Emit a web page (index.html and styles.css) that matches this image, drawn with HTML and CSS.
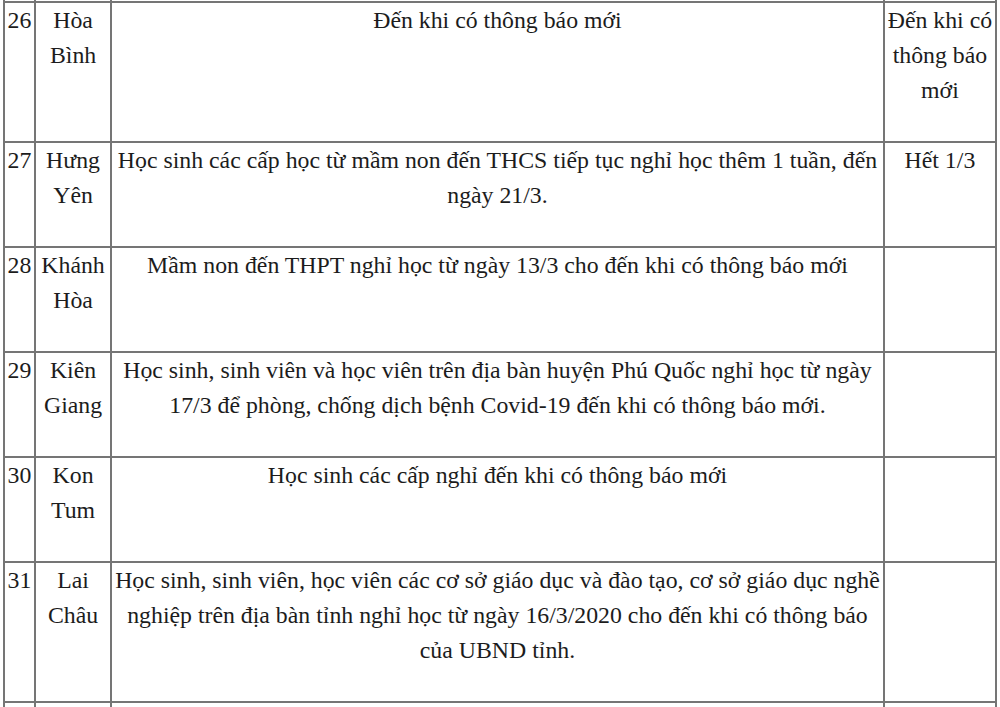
FILE: index.html
```html
<!DOCTYPE html>
<html lang="vi">
<head>
<meta charset="utf-8">
<title>Danh sách</title>
<link rel="stylesheet" href="styles.css">
</head>
<body>
<table class="sheet">
  <colgroup>
    <col class="c-no">
    <col class="c-prov">
    <col class="c-desc">
    <col class="c-end">
  </colgroup>
  <tr class="stub stub-top"><td></td><td></td><td></td><td></td></tr>
  <tr class="r3">
    <td>26</td>
    <td>Hòa Bình</td>
    <td class="desc">Đến khi có thông báo mới</td>
    <td>Đến khi có thông báo mới</td>
  </tr>
  <tr class="r2">
    <td>27</td>
    <td>Hưng Yên</td>
    <td class="desc">Học sinh các cấp học từ mầm non đến THCS tiếp tục nghỉ học thêm 1 tuần, đến<br>ngày 21/3.</td>
    <td>Hết 1/3</td>
  </tr>
  <tr class="r2">
    <td>28</td>
    <td>Khánh Hòa</td>
    <td class="desc">Mầm non đến THPT nghỉ học từ ngày 13/3 cho đến khi có thông báo mới</td>
    <td></td>
  </tr>
  <tr class="r2">
    <td>29</td>
    <td>Kiên Giang</td>
    <td class="desc">Học sinh, sinh viên và học viên trên địa bàn huyện Phú Quốc nghỉ học từ ngày<br>17/3 để phòng, chống dịch bệnh Covid-19 đến khi có thông báo mới.</td>
    <td></td>
  </tr>
  <tr class="r2">
    <td>30</td>
    <td>Kon Tum</td>
    <td class="desc">Học sinh các cấp nghỉ đến khi có thông báo mới</td>
    <td></td>
  </tr>
  <tr class="r3">
    <td>31</td>
    <td>Lai Châu</td>
    <td class="desc">Học sinh, sinh viên, học viên các cơ sở giáo dục và đào tạo, cơ sở giáo dục nghề<br>nghiệp trên địa bàn tỉnh nghỉ học từ ngày 16/3/2020 cho đến khi có thông báo<br>của UBND tỉnh.</td>
    <td></td>
  </tr>
  <tr class="stub stub-bottom"><td></td><td></td><td></td><td></td></tr>
</table>
</body>
</html>
```

FILE: styles.css
```css
html, body {
  margin: 0;
  padding: 0;
  background: #ffffff;
}

body {
  overflow: hidden;
}

.sheet {
  margin-left: 3px;
  border-collapse: collapse;
  table-layout: fixed;
  width: 994px;
  font-family: "Liberation Serif", "Times New Roman", serif;
  font-size: 23.8px;
  line-height: 35px;
  color: #1c1c1c;
}

.c-no { width: 31px; }
.c-prov { width: 76px; }
.c-desc { width: 772px; }
.c-end { width: 112px; }

.sheet td {
  border: 2px solid #757575;
  padding: 0 1px 33px;
  vertical-align: top;
  text-align: center;
}

.sheet td.desc {
  white-space: nowrap;
}

.sheet .stub td {
  padding: 0;
  height: 1px;
}

.sheet .stub-top td {
  border-top: none;
}

.sheet .stub-bottom td {
  border-bottom: none;
  height: 6px;
}
```
